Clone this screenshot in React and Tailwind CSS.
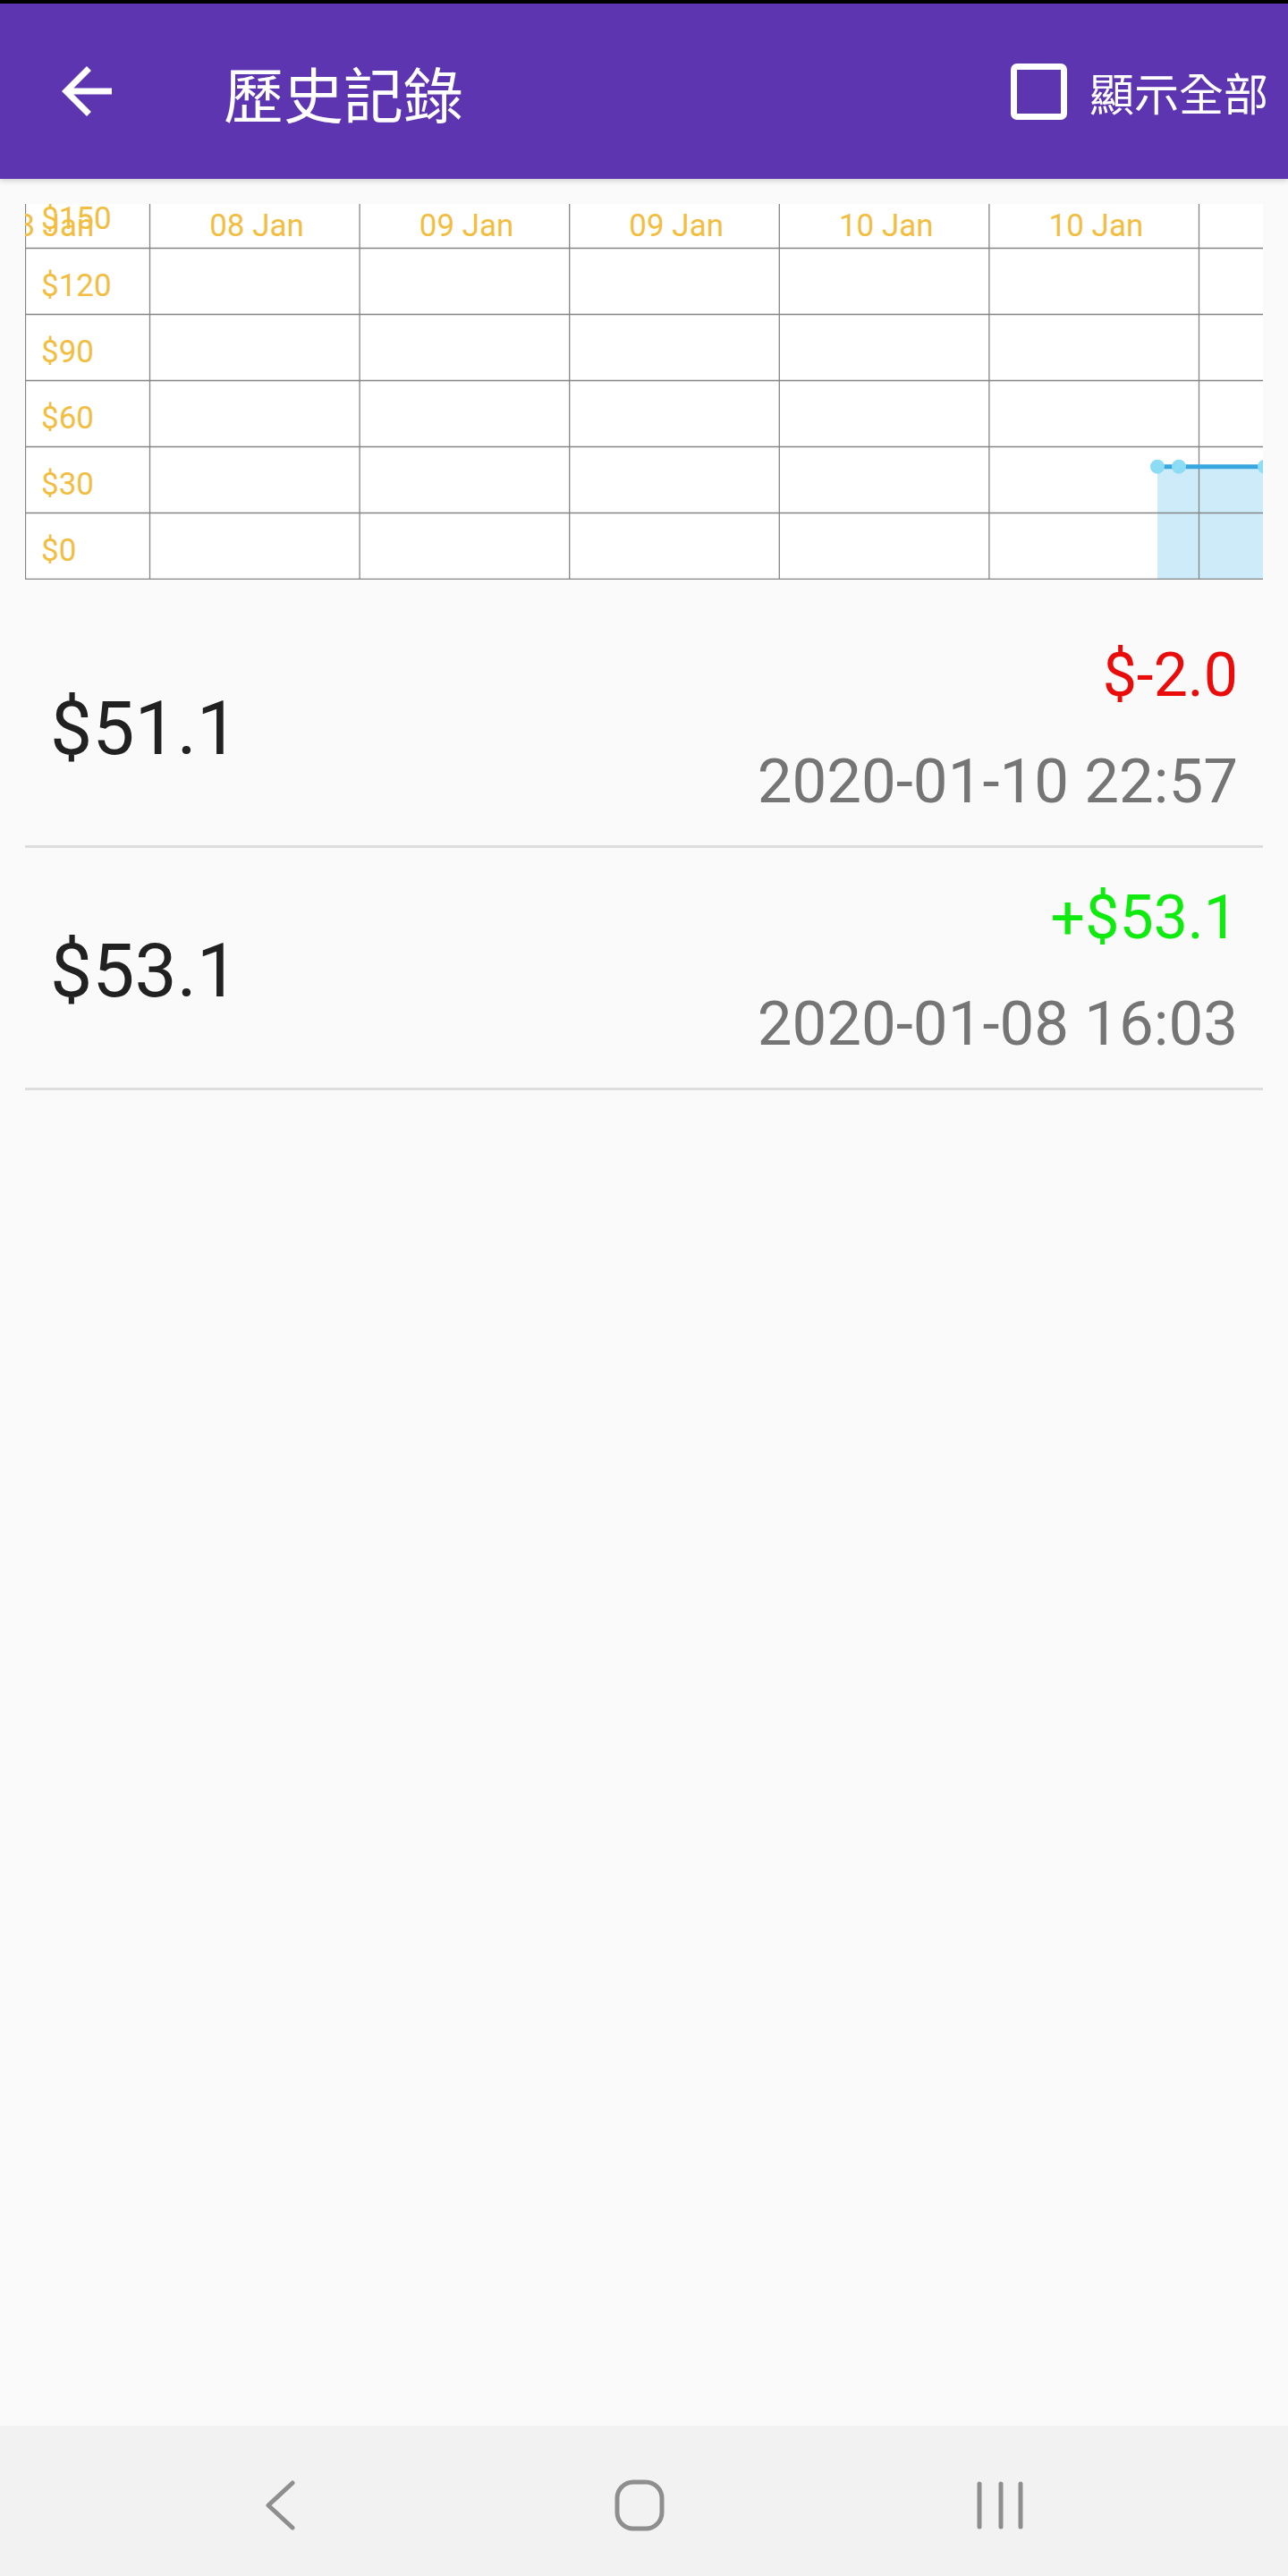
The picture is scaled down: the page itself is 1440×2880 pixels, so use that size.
import React from "react";

const cjk = { fontFamily: '"Noto Sans CJK TC", "Noto Sans", sans-serif' };

const gridY = [49, 123, 197, 271, 345, 419];
const gridX = [0.5, 139.5, 374.1, 608.7, 843.3, 1077.9, 1312.5];
const xLabels = [
  { x: 24.4, t: "08 Jan" },
  { x: 259, t: "08 Jan" },
  { x: 493.6, t: "09 Jan" },
  { x: 728.2, t: "09 Jan" },
  { x: 962.8, t: "10 Jan" },
  { x: 1197.4, t: "10 Jan" },
];
const yLabels = [
  { y: 28, t: "$150" },
  { y: 103, t: "$120" },
  { y: 177, t: "$90" },
  { y: 251, t: "$60" },
  { y: 325, t: "$30" },
  { y: 399, t: "$0" },
];

const records = [
  { value: "$51.1", change: "$-2.0", up: false, date: "2020-01-10 22:57" },
  { value: "$53.1", change: "+$53.1", up: true, date: "2020-01-08 16:03" },
];

function Chart() {
  return (
    <svg width="1384" height="420" viewBox="0 0 1384 420" className="block overflow-hidden bg-white">
      <rect x="1266" y="293.7" width="118" height="126" fill="#cdebf8" />
      {gridY.map(y => (
        <line key={y} x1="0" x2="1384" y1={y + 0.5} y2={y + 0.5} stroke="#858585" strokeWidth="1.3" />
      ))}
      {gridX.map(x => (
        <line key={x} x1={x} x2={x} y1="0" y2="420" stroke="#858585" strokeWidth="1.3" />
      ))}
      <line x1="1266" x2="1384" y1="293.7" y2="293.7" stroke="#3aa6de" strokeWidth="5" />
      <circle cx="1266" cy="293.7" r="8" fill="#8cdcf4" />
      <circle cx="1290" cy="293.7" r="8" fill="#8cdcf4" />
      <circle cx="1386" cy="293.7" r="8" fill="#8cdcf4" />
      <g fontFamily="Roboto, sans-serif" fontSize="35" fill="#f1be42">
        {xLabels.map((l, i) => (
          <text key={i} x={l.x} y="36" textAnchor="middle">{l.t}</text>
        ))}
        {yLabels.map(l => (
          <text key={l.t} x="18" y={l.y}>{l.t}</text>
        ))}
      </g>
    </svg>
  );
}

function RecordRow({ item }) {
  return (
    <div>
      <div className="flex h-[268px] justify-between px-[28px]">
        <div className="mt-[88px] text-[84px] leading-[100px] text-[#212121]">{item.value}</div>
        <div className="flex flex-col items-end pt-[38px]">
          <div className={`text-[68px] leading-[80px] ${item.up ? "text-[#0fea0f]" : "text-[#ea0b0b]"}`}>
            {item.change}
          </div>
          <div className="mt-[39px] text-[69px] leading-[80px] text-[#757575]">{item.date}</div>
        </div>
      </div>
      <div className="h-[3px] bg-[#dddddd]" />
    </div>
  );
}

export default function App() {
  return (
    <div className="flex h-[2880px] w-[1440px] flex-col overflow-hidden bg-[#fafafa]" style={{ fontFamily: "Roboto, sans-serif" }}>
      <div className="h-[4px] bg-black" />
      <header className="relative z-10 flex h-[196px] items-center bg-[#5e35b1] text-white shadow-[0_2px_6px_rgba(0,0,0,0.18)]">
        <svg className="ml-[55px] h-[84px] w-[84px]" viewBox="0 0 24 24" fill="white">
          <path d="M20 11H7.83l5.59-5.59L12 4l-8 8 8 8 1.41-1.41L7.83 13H20v-2z" />
        </svg>
        <h1 className="ml-[111px] text-[67px] leading-none font-normal" style={cjk}>歷史記錄</h1>
        <div className="ml-auto flex items-center">
          <div className="h-[63px] w-[63px] rounded-[7px] border-[7px] border-white" />
          <span className="ml-[25px] mr-[22px] text-[50px] leading-none" style={cjk}>顯示全部</span>
        </div>
      </header>

      <main className="flex-1">
        <div className="mx-[28px] mt-[28px]">
          <Chart />
        </div>
        <div className="mx-[28px] mt-[29px]">
          {records.map(r => (
            <RecordRow key={r.date} item={r} />
          ))}
        </div>
      </main>

      <nav className="flex h-[168px] items-center bg-[#f2f2f2] pl-[110px] pt-[9px]">
        <div className="flex w-[403px] justify-center">
          <svg width="40" height="60" viewBox="0 0 40 60" fill="none" stroke="#8e8e8e" strokeWidth="5" strokeLinecap="round" strokeLinejoin="round">
            <polyline points="35,5 8,30 35,55" />
          </svg>
        </div>
        <div className="flex w-[403px] justify-center">
          <svg width="64" height="64" viewBox="0 0 64 64" fill="none" stroke="#8e8e8e" strokeWidth="5">
            <rect x="7" y="6" width="50" height="52" rx="18" />
          </svg>
        </div>
        <div className="flex w-[403px] justify-center">
          <svg width="60" height="60" viewBox="0 0 60 60" fill="none" stroke="#8e8e8e" strokeWidth="5" strokeLinecap="round">
            <line x1="7" y1="6" x2="7" y2="54" />
            <line x1="31" y1="6" x2="31" y2="54" />
            <line x1="53" y1="6" x2="53" y2="54" />
          </svg>
        </div>
      </nav>
    </div>
  );
}
